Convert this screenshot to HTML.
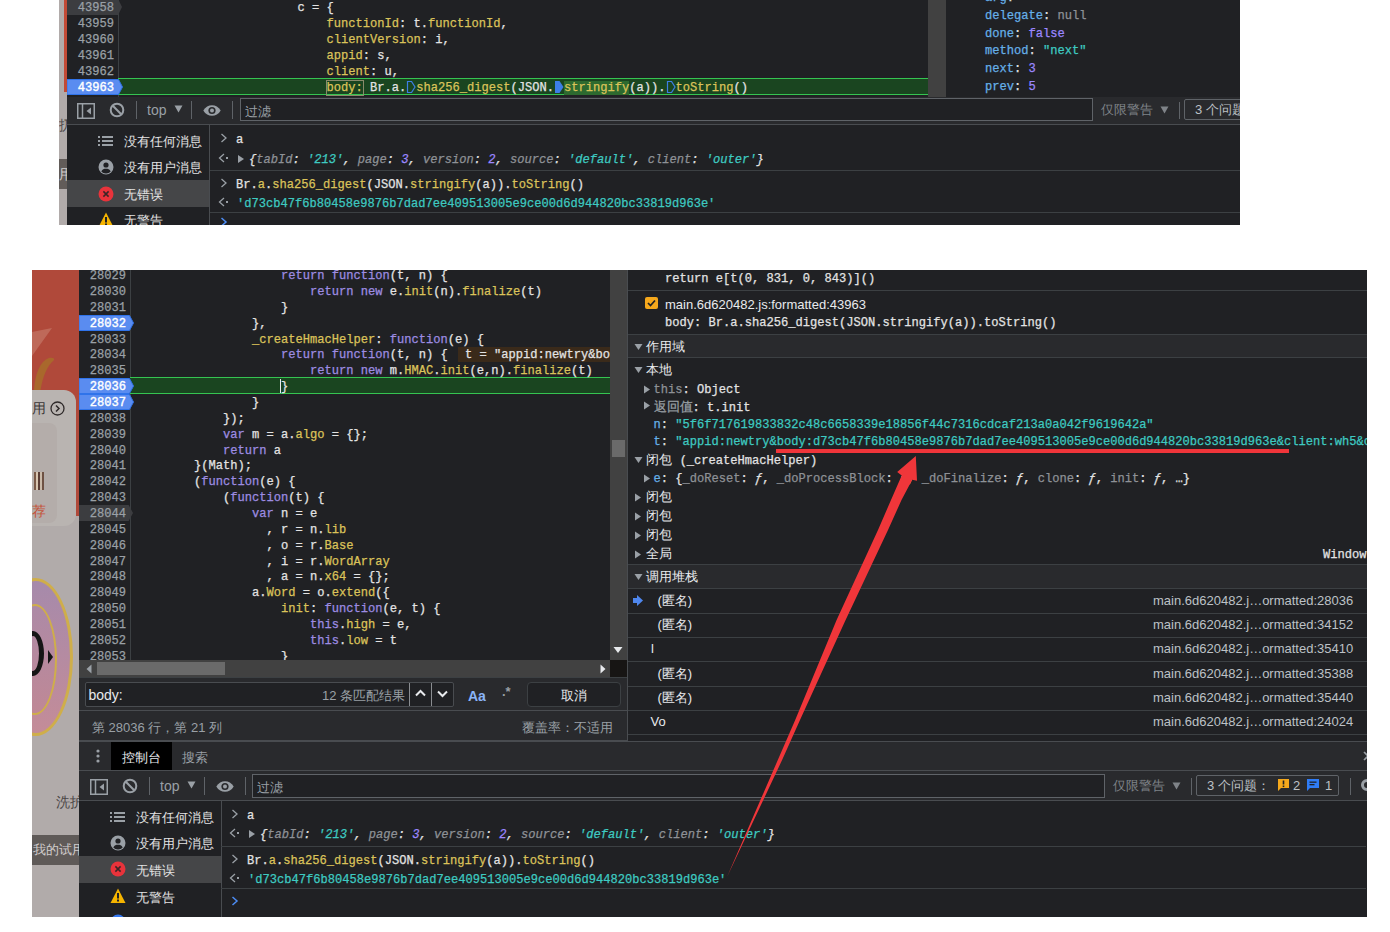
<!DOCTYPE html><html><head><meta charset="utf-8"><style>
*{box-sizing:border-box;margin:0;padding:0}
html,body{width:1390px;height:932px;overflow:hidden;background:#fff}
body{position:relative;font-family:"Liberation Sans",sans-serif}
div{position:absolute;white-space:pre}
i{font-style:normal}
svg{display:block}
.it i{font-style:italic}
.m{font-family:"Liberation Mono",monospace;font-size:12.08px;color:#e3e3e3;padding-top:1px;-webkit-text-stroke:0.25px}
.u{font-family:"Liberation Sans",sans-serif;font-size:13px;color:#e3e3e3}
.k{color:#9d8ce2}
.p{color:#dbc35a}
.w{color:#e3e3e3}
.s{color:#3ecac1}
.n{color:#9b87ff}
.b{color:#66b0e8}
.g{color:#8e9196}
.it{font-style:italic}
.ln{color:#9aa0a6;text-align:right}
.dt{background:#202124;overflow:hidden}
</style></head><body><div style="left:59px;top:0px;width:1181px;height:225px;overflow:hidden;background:#202124"><div style="left:0px;top:0px;width:8px;height:225px;background:#b1abaa"></div><div style="left:5px;top:0px;width:3px;height:92px;background:#c24a36"></div><div style="left:0px;top:0px;width:8px;height:225px;overflow:hidden"><div style="left:0px;top:159px;width:8px;height:30px;background:#625c59"></div><div class="u" style="left:0px;top:115px;height:20px;line-height:20px;color:#4a4646;font-size:14px">扔</div><div class="u" style="left:0px;top:164px;height:20px;line-height:20px;color:#d0cccc;font-size:14px">用</div></div><div style="left:8px;top:0px;width:52px;height:97px;background:#202124;border-right:1px solid #3c4043"></div><div style="left:59px;top:78px;width:810px;height:17px;background:#1a4520;border-top:1px solid #35c451;border-bottom:1px solid #35c451"></div><div style="left:8px;top:-1px;width:55px;height:16px;background:#3c3d40;clip-path:polygon(0 0,93% 0,100% 50%,93% 100%,0 100%)"></div><div class="m" style="left:8px;top:-1px;height:16px;line-height:16px;width:47px;text-align:right;color:#9aa0a6">43958</div><div class="m" style="left:8px;top:15px;height:16px;line-height:16px;width:47px;text-align:right;color:#9aa0a6">43959</div><div class="m" style="left:8px;top:31px;height:16px;line-height:16px;width:47px;text-align:right;color:#9aa0a6">43960</div><div class="m" style="left:8px;top:47px;height:16px;line-height:16px;width:47px;text-align:right;color:#9aa0a6">43961</div><div class="m" style="left:8px;top:63px;height:16px;line-height:16px;width:47px;text-align:right;color:#9aa0a6">43962</div><div style="left:8px;top:79px;width:56px;height:16px"><svg width="56" height="16"><path d="M0 0.5H51.5L55.5 8L51.5 15.5H0Z" fill="#5a8cf0" stroke="#2f73ea" stroke-width="1"/></svg></div><div class="m" style="left:8px;top:79px;height:16px;line-height:16px;width:47px;text-align:right;color:#ffffff;-webkit-text-stroke:0.4px">43963</div><div class="m" style="left:238.6px;top:-1px;height:16px;line-height:16px;"><i class="w">c = {</i></div><div class="m" style="left:267.6px;top:15px;height:16px;line-height:16px;"><i class="p">functionId</i><i class="w">: t.</i><i class="p">functionId</i><i class="w">,</i></div><div class="m" style="left:267.6px;top:31px;height:16px;line-height:16px;"><i class="p">clientVersion</i><i class="w">: i,</i></div><div class="m" style="left:267.6px;top:47px;height:16px;line-height:16px;"><i class="p">appid</i><i class="w">: s,</i></div><div class="m" style="left:267.6px;top:63px;height:16px;line-height:16px;"><i class="p">client</i><i class="w">: u,</i></div><div class="m" style="left:267.6px;top:79px;height:16px;line-height:16px;"><i class="p" style="outline:1px solid #8a8a6a;outline-offset:0px">body:</i><i class="w"> Br.a.</i><i style="display:inline-block;width:10px;height:12px;vertical-align:-2px;position:relative"><svg width="10" height="12" style="position:absolute;left:0;top:0"><path d="M1.5 0.5H5.5L9 6L5.5 11.5H1.5Z" fill="none" stroke="#3d7ee6" stroke-width="1.2"/></svg></i><i class="p">sha256_digest</i><i class="w">(JSON.</i><i style="display:inline-block;width:10px;height:12px;vertical-align:-2px;position:relative"><svg width="10" height="12" style="position:absolute;left:0;top:0"><path d="M1 0H5.5L9.5 6L5.5 12H1Z" fill="#3d7ee6"/></svg></i><i class="p" style="background:#2d6a2f">stringify</i><i class="w">(a)).</i><i style="display:inline-block;width:10px;height:12px;vertical-align:-2px;position:relative"><svg width="10" height="12" style="position:absolute;left:0;top:0"><path d="M1.5 0.5H5.5L9 6L5.5 11.5H1.5Z" fill="none" stroke="#3d7ee6" stroke-width="1.2"/></svg></i><i class="p">toString</i><i class="w">()</i></div><div style="left:869px;top:0px;width:18px;height:97px;background:#414141"></div><div style="left:887px;top:0px;width:294px;height:97px;background:#202124"></div><div class="m" style="left:926px;top:-11px;height:16px;line-height:16px;"><i class="b">arg</i><i class="w">:</i></div><div class="m" style="left:926px;top:7px;height:16px;line-height:16px;"><i class="b">delegate</i><i class="w">: </i><i class="g">null</i></div><div class="m" style="left:926px;top:25px;height:16px;line-height:16px;"><i class="b">done</i><i class="w">: </i><i class="n">false</i></div><div class="m" style="left:926px;top:42px;height:16px;line-height:16px;"><i class="b">method</i><i class="w">: </i><i class="s">&quot;next&quot;</i></div><div class="m" style="left:926px;top:60px;height:16px;line-height:16px;"><i class="b">next</i><i class="w">: </i><i class="n">3</i></div><div class="m" style="left:926px;top:78px;height:16px;line-height:16px;"><i class="b">prev</i><i class="w">: </i><i class="n">5</i></div><div style="left:8px;top:97px;width:1173px;height:28px;background:#292a2d;border-bottom:1px solid #494c50"></div><div style="left:18px;top:103px;width:18px;height:16px"><svg width="18" height="16"><rect x="0.75" y="0.75" width="16.5" height="14.5" fill="none" stroke="#9aa0a6" stroke-width="1.5"/><line x1="5.5" y1="1" x2="5.5" y2="15" stroke="#9aa0a6" stroke-width="1.5"/><path d="M14 4.5L9.5 8L14 11.5Z" fill="#9aa0a6"/></svg></div><div style="left:50px;top:102px;width:16px;height:16px"><svg width="16" height="16"><circle cx="8" cy="8" r="6.3" fill="none" stroke="#9aa0a6" stroke-width="2"/><line x1="3.8" y1="3.8" x2="12.2" y2="12.2" stroke="#9aa0a6" stroke-width="2"/></svg></div><div style="left:77px;top:101px;width:1px;height:18px;background:#5f6368"></div><div class="u" style="left:88px;top:101px;height:18px;line-height:18px;color:#9aa0a6;font-size:14px">top</div><div style="left:115px;top:105px;width:9px;height:8px"><svg width="9" height="8"><path d="M0.5 0.5H8.5L4.5 7.5Z" fill="#9aa0a6"/></svg></div><div style="left:132px;top:101px;width:1px;height:18px;background:#5f6368"></div><div style="left:144px;top:105px;width:18px;height:11px"><svg width="18" height="11"><path d="M0.3 5.5C2.5 1.8 5.5 0.2 9 0.2S15.5 1.8 17.7 5.5C15.5 9.2 12.5 10.8 9 10.8S2.5 9.2 0.3 5.5Z" fill="#9aa0a6"/><circle cx="9" cy="5.5" r="3.6" fill="#292a2d"/><circle cx="9" cy="5.5" r="2" fill="#9aa0a6"/></svg></div><div style="left:173px;top:101px;width:1px;height:18px;background:#5f6368"></div><div style="left:181px;top:98px;width:853px;height:23px;background:#202124;border:1px solid #5f6368"></div><div class="u" style="left:186px;top:101px;height:21px;line-height:21px;color:#9aa0a6;font-size:13px">过滤</div><div class="u" style="left:1042px;top:100px;height:20px;line-height:20px;color:#7f8388;font-size:13px">仅限警告</div><div style="left:1101px;top:106px;width:9px;height:8px"><svg width="9" height="8"><path d="M0.5 0.5H8.5L4.5 7.5Z" fill="#7f8388"/></svg></div><div style="left:1120px;top:102px;width:1px;height:17px;background:#5f6368"></div><div style="left:1125px;top:99px;width:80px;height:21px;border:1px solid #5f6368;border-radius:2px"></div><div class="u" style="left:1136px;top:100px;height:20px;line-height:20px;color:#bdc1c6;font-size:13px">3 个问题</div><div style="left:8px;top:125px;width:143px;height:200px;background:#202124;border-right:1px solid #494c50"></div><div style="left:8px;top:180px;width:142px;height:27px;background:#454648"></div><div style="left:39px;top:133px;width:16px;height:16px"><svg width="16" height="16"><g fill="#9aa0a6"><rect x="0" y="3" width="2" height="2"/><rect x="4" y="3" width="11" height="2"/><rect x="0" y="7" width="2" height="2"/><rect x="4" y="7" width="11" height="2"/><rect x="0" y="11" width="2" height="2"/><rect x="4" y="11" width="11" height="2"/></g></svg></div><div class="u" style="left:65px;top:132px;height:20px;line-height:20px;color:#e3e3e3;font-size:13px">没有任何消息</div><div style="left:39px;top:159px;width:16px;height:16px"><svg width="16" height="16"><circle cx="8" cy="8" r="7.5" fill="#9aa0a6"/><circle cx="8" cy="6" r="2.6" fill="#202124"/><path d="M3.3 12.5C4.5 10.3 6 9.8 8 9.8S11.5 10.3 12.7 12.5C11.5 13.8 10 14.4 8 14.4S4.5 13.8 3.3 12.5Z" fill="#202124"/></svg></div><div class="u" style="left:65px;top:158px;height:20px;line-height:20px;color:#e3e3e3;font-size:13px">没有用户消息</div><div style="left:39px;top:186px;width:16px;height:16px"><svg width="16" height="16"><circle cx="8" cy="8" r="7.5" fill="#e8333b"/><path d="M5.4 5.4L10.6 10.6M10.6 5.4L5.4 10.6" stroke="#3a2526" stroke-width="1.5"/></svg></div><div class="u" style="left:65px;top:185px;height:20px;line-height:20px;color:#e3e3e3;font-size:13px">无错误</div><div style="left:39px;top:212px;width:16px;height:16px"><svg width="16" height="16"><path d="M8 0.5L15.5 15H0.5Z" fill="#f5b400"/><rect x="7" y="5" width="2" height="5.5" fill="#202124"/><rect x="7" y="11.5" width="2" height="2" fill="#202124"/></svg></div><div class="u" style="left:65px;top:211px;height:20px;line-height:20px;color:#e3e3e3;font-size:13px">无警告</div><div style="left:151px;top:170px;width:1030px;height:1px;background:#3c4043"></div><div style="left:151px;top:212px;width:1030px;height:1px;background:#3c4043"></div><div style="left:161px;top:133px;width:8px;height:10px"><svg width="8" height="10"><path d="M1.5 1L6 5L1.5 9" fill="none" stroke="#9aa0a6" stroke-width="1.3"/></svg></div><div class="m" style="left:177px;top:131px;height:16px;line-height:16px;"><i class="w">a</i></div><div style="left:159px;top:153px;width:12px;height:10px"><svg width="12" height="10"><path d="M6 1L1.5 5L6 9" fill="none" stroke="#9aa0a6" stroke-width="1.3"/><rect x="8" y="4" width="2" height="2" fill="#9aa0a6"/></svg></div><div style="left:177.5px;top:154px;width:8px;height:10px"><svg width="8" height="10"><path d="M1 1L7 5L1 9Z" fill="#9aa0a6"/></svg></div><div class="m" style="left:190px;top:151px;height:16px;line-height:16px;"><i class="it"><i class="w">{</i><i class="g">tabId</i><i class="w">: </i><i class="s">&#x27;213&#x27;</i><i class="w">, </i><i class="g">page</i><i class="w">: </i><i class="n">3</i><i class="w">, </i><i class="g">version</i><i class="w">: </i><i class="n">2</i><i class="w">, </i><i class="g">source</i><i class="w">: </i><i class="s">&#x27;default&#x27;</i><i class="w">, </i><i class="g">client</i><i class="w">: </i><i class="s">&#x27;outer&#x27;</i><i class="w">}</i></i></div><div style="left:161px;top:178px;width:8px;height:10px"><svg width="8" height="10"><path d="M1.5 1L6 5L1.5 9" fill="none" stroke="#9aa0a6" stroke-width="1.3"/></svg></div><div class="m" style="left:177px;top:176px;height:16px;line-height:16px;"><i class="w">Br.</i><i class="p">a</i><i class="w">.</i><i class="p">sha256_digest</i><i class="w">(JSON.</i><i class="p">stringify</i><i class="w">(a)).</i><i class="p">toString</i><i class="w">()</i></div><div style="left:159px;top:197px;width:12px;height:10px"><svg width="12" height="10"><path d="M6 1L1.5 5L6 9" fill="none" stroke="#9aa0a6" stroke-width="1.3"/><rect x="8" y="4" width="2" height="2" fill="#9aa0a6"/></svg></div><div class="m" style="left:178px;top:195px;height:16px;line-height:16px;"><i class="s">&#x27;d73cb47f6b80458e9876b7dad7ee409513005e9ce00d6d944820bc33819d963e&#x27;</i></div><div style="left:161px;top:217px;width:8px;height:10px"><svg width="8" height="10"><path d="M1.5 1L6 5L1.5 9" fill="none" stroke="#4d8df5" stroke-width="1.5"/></svg></div></div><div style="left:32px;top:270px;width:1335px;height:647px;overflow:hidden;background:#202124"><div style="left:0px;top:0px;width:47px;height:647px;background:#b1abaa;overflow:hidden"><div style="left:0px;top:0px;width:48px;height:220px;background:#b0493a"></div><svg style="position:absolute;left:0;top:0" width="48" height="130"><path d="M0 62L20 58L0 86Z" fill="#d09080" opacity="0.45"/><path d="M2 120C3 104 8 91 17 88C20 87.5 23 88.5 22 90C15 96 11 106 8.5 120Z" fill="#a9682c"/></svg><div style="left:-10px;top:120px;width:54px;height:136px;background:#b9b4b1;border-radius:0 12px 12px 0"></div><div style="left:-10px;top:153px;width:34.5px;height:100px;background:#b4adaa;border-radius:0 8px 8px 0"></div><div class="u" style="left:0px;top:128px;height:20px;line-height:20px;color:#3b3636;font-size:14px">用</div><div style="left:18px;top:131px;width:15px;height:15px"><svg width="15" height="15"><circle cx="7.5" cy="7.5" r="6.5" fill="none" stroke="#2f2a2a" stroke-width="1.3"/><path d="M6 4.5L9 7.5L6 10.5" fill="none" stroke="#2f2a2a" stroke-width="1.5"/></svg></div><div style="left:2px;top:202px;width:10px;height:18px;background:linear-gradient(90deg,#7a5a48 0 20%,#d8c5b0 20% 40%,#5a3d35 40% 60%,#c9b9a8 60% 80%,#6e5244 80%)"></div><div class="u" style="left:0px;top:231px;height:20px;line-height:20px;color:#c4533a;font-size:14px">荐</div><div style="left:-34.5px;top:308px;width:75px;height:158px;border-radius:50%;border:3px solid #cfae4a;background:linear-gradient(#a68aab,#c48c98)"></div><div style="left:-19px;top:333.5px;width:44px;height:111px;border-radius:50%;border:2px solid #cfae4a;background:linear-gradient(#ad8aa6,#bf8896)"></div><div style="left:-10px;top:361px;width:22px;height:45px;border-radius:50%;border:5px solid #151515"></div><div style="left:16px;top:380px;width:5px;height:14px"><svg width="5" height="14"><path d="M0 0L5 7L0 14Z" fill="#151515"/></svg></div><div class="u" style="left:24px;top:522px;height:20px;line-height:20px;color:#4a4646;font-size:14px">洗护</div><div style="left:0px;top:565px;width:48px;height:30px;background:#5f5a58"></div><div class="u" style="left:1px;top:570px;height:20px;line-height:20px;color:#d0cccc;font-size:13px">我的试用</div></div><div style="left:44px;top:0px;width:3px;height:246px;background:#b0493a"></div><div style="left:47px;top:0px;width:52px;height:390px;background:#202124;border-right:1px solid #3c4043"></div><div style="left:98px;top:107.15px;width:480px;height:17px;background:#1a4520;border-top:1px solid #35c451;border-bottom:1px solid #35c451"></div><div class="m" style="left:47px;top:-2.8px;height:16px;line-height:16px;width:47px;text-align:right;color:#9aa0a6">28029</div><div class="m" style="left:249.0px;top:-2.8px;height:16px;line-height:16px;"><i class="k">return function</i><i class="w">(t, n) {</i></div><div class="m" style="left:47px;top:13.05px;height:16px;line-height:16px;width:47px;text-align:right;color:#9aa0a6">28030</div><div class="m" style="left:278.0px;top:13.05px;height:16px;line-height:16px;"><i class="k">return new</i><i class="w"> e.</i><i class="p">init</i><i class="w">(n).</i><i class="p">finalize</i><i class="w">(t)</i></div><div class="m" style="left:47px;top:28.9px;height:16px;line-height:16px;width:47px;text-align:right;color:#9aa0a6">28031</div><div class="m" style="left:249.0px;top:28.9px;height:16px;line-height:16px;"><i class="w">}</i></div><div style="left:47px;top:44.75px;width:55px;height:16px"><svg width="55" height="16"><path d="M0 0.5H50.5L54.5 8L50.5 15.5H0Z" fill="#5a8cf0" stroke="#2f73ea" stroke-width="1"/></svg></div><div class="m" style="left:47px;top:44.75px;height:16px;line-height:16px;width:47px;text-align:right;color:#ffffff;-webkit-text-stroke:0.4px">28032</div><div class="m" style="left:220.0px;top:44.75px;height:16px;line-height:16px;"><i class="w">},</i></div><div class="m" style="left:47px;top:60.6px;height:16px;line-height:16px;width:47px;text-align:right;color:#9aa0a6">28033</div><div class="m" style="left:220.0px;top:60.6px;height:16px;line-height:16px;"><i class="p">_createHmacHelper</i><i class="w">: </i><i class="k">function</i><i class="w">(e) {</i></div><div class="m" style="left:47px;top:76.45px;height:16px;line-height:16px;width:47px;text-align:right;color:#9aa0a6">28034</div><div class="m" style="left:249.0px;top:76.45px;height:16px;line-height:16px;"><i class="k">return function</i><i class="w">(t, n) {</i></div><div class="m" style="left:47px;top:92.3px;height:16px;line-height:16px;width:47px;text-align:right;color:#9aa0a6">28035</div><div class="m" style="left:278.0px;top:92.3px;height:16px;line-height:16px;"><i class="k">return new</i><i class="w"> m.</i><i class="p">HMAC</i><i class="w">.</i><i class="p">init</i><i class="w">(e,n).</i><i class="p">finalize</i><i class="w">(t)</i></div><div style="left:47px;top:108.15px;width:55px;height:16px"><svg width="55" height="16"><path d="M0 0.5H50.5L54.5 8L50.5 15.5H0Z" fill="#5a8cf0" stroke="#2f73ea" stroke-width="1"/></svg></div><div class="m" style="left:47px;top:108.15px;height:16px;line-height:16px;width:47px;text-align:right;color:#ffffff;-webkit-text-stroke:0.4px">28036</div><div class="m" style="left:249.0px;top:108.15px;height:16px;line-height:16px;"><i class="w">}</i></div><div style="left:47px;top:124.0px;width:55px;height:16px"><svg width="55" height="16"><path d="M0 0.5H50.5L54.5 8L50.5 15.5H0Z" fill="#5a8cf0" stroke="#2f73ea" stroke-width="1"/></svg></div><div class="m" style="left:47px;top:124.0px;height:16px;line-height:16px;width:47px;text-align:right;color:#ffffff;-webkit-text-stroke:0.4px">28037</div><div class="m" style="left:220.0px;top:124.0px;height:16px;line-height:16px;"><i class="w">}</i></div><div class="m" style="left:47px;top:139.85px;height:16px;line-height:16px;width:47px;text-align:right;color:#9aa0a6">28038</div><div class="m" style="left:191.0px;top:139.85px;height:16px;line-height:16px;"><i class="w">});</i></div><div class="m" style="left:47px;top:155.7px;height:16px;line-height:16px;width:47px;text-align:right;color:#9aa0a6">28039</div><div class="m" style="left:191.0px;top:155.7px;height:16px;line-height:16px;"><i class="k">var</i><i class="w"> m = a.</i><i class="p">algo</i><i class="w"> = {};</i></div><div class="m" style="left:47px;top:171.55px;height:16px;line-height:16px;width:47px;text-align:right;color:#9aa0a6">28040</div><div class="m" style="left:191.0px;top:171.55px;height:16px;line-height:16px;"><i class="k">return</i><i class="w"> a</i></div><div class="m" style="left:47px;top:187.4px;height:16px;line-height:16px;width:47px;text-align:right;color:#9aa0a6">28041</div><div class="m" style="left:162.0px;top:187.4px;height:16px;line-height:16px;"><i class="w">}(Math);</i></div><div class="m" style="left:47px;top:203.25px;height:16px;line-height:16px;width:47px;text-align:right;color:#9aa0a6">28042</div><div class="m" style="left:162.0px;top:203.25px;height:16px;line-height:16px;"><i class="w">(</i><i class="k">function</i><i class="w">(e) {</i></div><div class="m" style="left:47px;top:219.1px;height:16px;line-height:16px;width:47px;text-align:right;color:#9aa0a6">28043</div><div class="m" style="left:191.0px;top:219.1px;height:16px;line-height:16px;"><i class="w">(</i><i class="k">function</i><i class="w">(t) {</i></div><div style="left:47px;top:234.95px;width:54px;height:16px;background:#3c3d40;clip-path:polygon(0 0,92% 0,100% 50%,92% 100%,0 100%)"></div><div class="m" style="left:47px;top:234.95px;height:16px;line-height:16px;width:47px;text-align:right;color:#9aa0a6">28044</div><div class="m" style="left:220.0px;top:234.95px;height:16px;line-height:16px;"><i class="k">var</i><i class="w"> n = e</i></div><div class="m" style="left:47px;top:250.8px;height:16px;line-height:16px;width:47px;text-align:right;color:#9aa0a6">28045</div><div class="m" style="left:234.5px;top:250.8px;height:16px;line-height:16px;"><i class="w">, r = n.</i><i class="p">lib</i></div><div class="m" style="left:47px;top:266.65px;height:16px;line-height:16px;width:47px;text-align:right;color:#9aa0a6">28046</div><div class="m" style="left:234.5px;top:266.65px;height:16px;line-height:16px;"><i class="w">, o = r.</i><i class="p">Base</i></div><div class="m" style="left:47px;top:282.5px;height:16px;line-height:16px;width:47px;text-align:right;color:#9aa0a6">28047</div><div class="m" style="left:234.5px;top:282.5px;height:16px;line-height:16px;"><i class="w">, i = r.</i><i class="p">WordArray</i></div><div class="m" style="left:47px;top:298.35px;height:16px;line-height:16px;width:47px;text-align:right;color:#9aa0a6">28048</div><div class="m" style="left:234.5px;top:298.35px;height:16px;line-height:16px;"><i class="w">, a = n.</i><i class="p">x64</i><i class="w"> = {};</i></div><div class="m" style="left:47px;top:314.2px;height:16px;line-height:16px;width:47px;text-align:right;color:#9aa0a6">28049</div><div class="m" style="left:220.0px;top:314.2px;height:16px;line-height:16px;"><i class="w">a.</i><i class="p">Word</i><i class="w"> = o.</i><i class="p">extend</i><i class="w">({</i></div><div class="m" style="left:47px;top:330.05px;height:16px;line-height:16px;width:47px;text-align:right;color:#9aa0a6">28050</div><div class="m" style="left:249.0px;top:330.05px;height:16px;line-height:16px;"><i class="p">init</i><i class="w">: </i><i class="k">function</i><i class="w">(e, t) {</i></div><div class="m" style="left:47px;top:345.9px;height:16px;line-height:16px;width:47px;text-align:right;color:#9aa0a6">28051</div><div class="m" style="left:278.0px;top:345.9px;height:16px;line-height:16px;"><i class="k">this</i><i class="w">.</i><i class="p">high</i><i class="w"> = e,</i></div><div class="m" style="left:47px;top:361.75px;height:16px;line-height:16px;width:47px;text-align:right;color:#9aa0a6">28052</div><div class="m" style="left:278.0px;top:361.75px;height:16px;line-height:16px;"><i class="k">this</i><i class="w">.</i><i class="p">low</i><i class="w"> = t</i></div><div class="m" style="left:47px;top:377.6px;height:16px;line-height:16px;width:47px;text-align:right;color:#9aa0a6">28053</div><div class="m" style="left:249.0px;top:377.6px;height:16px;line-height:16px;"><i class="w">}</i></div><div class="m" style="left:425.75px;top:77.45px;height:15px;line-height:15px;background:#3a2a1a;padding-right:20px"><i class="w"> t = &quot;appid:newtry&amp;body:d73cb47f6b80458e9876b7dad7ee4095</i></div><div style="left:248.0px;top:109.15px;width:1px;height:14px;background:#e8eaed"></div><div style="left:578px;top:0px;width:18px;height:390px;background:#414141"></div><div style="left:580px;top:170px;width:13px;height:17px;background:#6a6a6a"></div><div style="left:581px;top:376px;width:10px;height:8px"><svg width="10" height="8"><path d="M0.5 1H9.5L5 7Z" fill="#e8eaed"/></svg></div><div style="left:47px;top:390px;width:531px;height:17px;background:#414141"></div><div style="left:65px;top:392px;width:128px;height:13px;background:#6a6a6a"></div><div style="left:54px;top:394px;width:6px;height:10px"><svg width="6" height="10"><path d="M5.5 0.5V9.5L0.5 5Z" fill="#9aa0a6"/></svg></div><div style="left:568px;top:394px;width:6px;height:10px"><svg width="6" height="10"><path d="M0.5 0.5V9.5L5.5 5Z" fill="#e8eaed"/></svg></div><div style="left:578px;top:390px;width:18px;height:17px;background:#171514"></div><div style="left:47px;top:407px;width:549px;height:34px;background:#292a2d;border-top:1px solid #3c4043;border-bottom:1px solid #494c50"></div><div style="left:53px;top:412px;width:369px;height:25px;background:#202124;border:1px solid #494c50;border-radius:2px"></div><div class="u" style="left:56.5px;top:415px;height:20px;line-height:20px;color:#e8eaed;font-size:14px">body:</div><div class="u" style="left:290px;top:416px;height:20px;line-height:20px;color:#9aa0a6;font-size:13px">12 条匹配结果</div><div style="left:377px;top:413px;width:1px;height:23px;background:#8a8d91"></div><div style="left:399px;top:413px;width:1px;height:23px;background:#8a8d91"></div><div style="left:383px;top:419px;width:11px;height:8px"><svg width="11" height="8"><path d="M1 6.5L5.5 2L10 6.5" fill="none" stroke="#e8eaed" stroke-width="2"/></svg></div><div style="left:405px;top:420px;width:11px;height:8px"><svg width="11" height="8"><path d="M1 1.5L5.5 6L10 1.5" fill="none" stroke="#e8eaed" stroke-width="2"/></svg></div><div class="u" style="left:436px;top:415.5px;height:20px;line-height:20px;color:#8ab4f8;font-size:14px;font-weight:bold">Aa</div><div class="u" style="left:470px;top:412px;height:20px;line-height:20px;color:#9aa0a6;font-size:13px;font-weight:bold">.*</div><div style="left:495px;top:412px;width:94px;height:25px;background:#202124;border:1px solid #3c4043;border-radius:4px"></div><div class="u" style="left:495px;top:416px;height:20px;line-height:20px;width:94px;text-align:center;color:#e8eaed;font-size:13px">取消</div><div style="left:47px;top:441px;width:549px;height:30px;background:#292a2d;border-bottom:1px solid #494c50"></div><div class="u" style="left:60px;top:448px;height:20px;line-height:20px;color:#9aa0a6;font-size:13px">第 28036 行，第 21 列</div><div class="u" style="left:490px;top:448px;height:20px;line-height:20px;color:#9aa0a6;font-size:13px">覆盖率：不适用</div><div style="left:595px;top:0px;width:1px;height:471px;background:#494c50"></div><div style="left:596px;top:0px;width:739px;height:471px;background:#202124"></div><div class="m" style="left:633px;top:0px;height:16px;line-height:16px;"><i class="w">return e[t(0, 831, 0, 843)]()</i></div><div style="left:596px;top:20px;width:739px;height:1px;background:#3c4043"></div><div style="left:613px;top:27px;width:13px;height:12px"><svg width="13" height="12"><rect x="0" y="0" width="13" height="12" rx="2" fill="#f5a81c"/><path d="M3 6L5.5 8.5L10 3.5" fill="none" stroke="#202124" stroke-width="1.7"/></svg></div><div class="u" style="left:633px;top:25px;height:20px;line-height:20px;color:#e8eaed;font-size:13px">main.6d620482.js:formatted:43963</div><div class="m" style="left:633px;top:44px;height:16px;line-height:16px;"><i class="w">body: Br.a.sha256_digest(JSON.stringify(a)).toString()</i></div><div style="left:596px;top:64px;width:739px;height:1px;background:#3c4043"></div><div style="left:596px;top:65px;width:739px;height:22px;background:#292a2d"></div><div style="left:602px;top:73px;width:9px;height:8px"><svg width="9" height="8"><path d="M0.5 1H8.5L4.5 7Z" fill="#9aa0a6"/></svg></div><div class="u" style="left:614px;top:67px;height:20px;line-height:20px;color:#e8eaed;font-size:13px">作用域</div><div style="left:596px;top:87px;width:739px;height:1px;background:#3c4043"></div><div style="left:602px;top:96px;width:9px;height:8px"><svg width="9" height="8"><path d="M0.5 1H8.5L4.5 7Z" fill="#9aa0a6"/></svg></div><div class="u" style="left:614px;top:90px;height:20px;line-height:20px;color:#e8eaed;font-size:13px">本地</div><div style="left:611px;top:115px;width:8px;height:9px"><svg width="8" height="9"><path d="M1 0.5L7 4.5L1 8.5Z" fill="#9aa0a6"/></svg></div><div class="m" style="left:621.5px;top:111px;height:16px;line-height:16px;"><i class="g">this</i><i class="w">: Object</i></div><div style="left:611px;top:131px;width:8px;height:9px"><svg width="8" height="9"><path d="M1 0.5L7 4.5L1 8.5Z" fill="#9aa0a6"/></svg></div><div class="m" style="left:621.5px;top:126px;height:20px;line-height:20px;"><span class="u" style="color:#9aa0a6">返回值</span><i class="w">: t.init</i></div><div class="m" style="left:621.5px;top:146px;height:16px;line-height:16px;"><i class="b">n</i><i class="w">: </i><i class="s">&quot;5f6f717619833832c48c6658339e18856f44c7316cdcaf213a0a042f9619642a&quot;</i></div><div class="m" style="left:621.5px;top:163px;height:16px;line-height:16px;"><i class="b">t</i><i class="w">: </i><i class="s">&quot;appid:newtry&amp;body:d73cb47f6b80458e9876b7dad7ee409513005e9ce00d6d944820bc33819d963e&amp;client:wh5&amp;clientVersion:1.0.0&quot;</i></div><div style="left:602px;top:186px;width:9px;height:8px"><svg width="9" height="8"><path d="M0.5 1H8.5L4.5 7Z" fill="#9aa0a6"/></svg></div><div class="u" style="left:614px;top:180px;height:20px;line-height:20px;color:#e8eaed;font-size:13px">闭包 <span class="m" style="margin-left:4px">(_createHmacHelper)</span></div><div style="left:611px;top:204px;width:8px;height:9px"><svg width="8" height="9"><path d="M1 0.5L7 4.5L1 8.5Z" fill="#9aa0a6"/></svg></div><div class="m" style="left:621.5px;top:200px;height:16px;line-height:16px;"><i class="b">e</i><i class="w">: {</i><i class="g">_doReset</i><i class="w">: </i><i class="it">ƒ</i><i class="w">, </i><i class="g">_doProcessBlock</i><i class="w">: </i><i class="it">ƒ</i><i class="w">, </i><i class="g">_doFinalize</i><i class="w">: </i><i class="it">ƒ</i><i class="w">, </i><i class="g">clone</i><i class="w">: </i><i class="it">ƒ</i><i class="w">, </i><i class="g">init</i><i class="w">: </i><i class="it">ƒ</i><i class="w">, …}</i></div><div style="left:602px;top:223px;width:8px;height:9px"><svg width="8" height="9"><path d="M1 0.5L7 4.5L1 8.5Z" fill="#9aa0a6"/></svg></div><div class="u" style="left:614px;top:217px;height:20px;line-height:20px;color:#e8eaed;font-size:13px">闭包</div><div style="left:602px;top:242px;width:8px;height:9px"><svg width="8" height="9"><path d="M1 0.5L7 4.5L1 8.5Z" fill="#9aa0a6"/></svg></div><div class="u" style="left:614px;top:236px;height:20px;line-height:20px;color:#e8eaed;font-size:13px">闭包</div><div style="left:602px;top:261px;width:8px;height:9px"><svg width="8" height="9"><path d="M1 0.5L7 4.5L1 8.5Z" fill="#9aa0a6"/></svg></div><div class="u" style="left:614px;top:255px;height:20px;line-height:20px;color:#e8eaed;font-size:13px">闭包</div><div style="left:602px;top:280px;width:8px;height:9px"><svg width="8" height="9"><path d="M1 0.5L7 4.5L1 8.5Z" fill="#9aa0a6"/></svg></div><div class="u" style="left:614px;top:274px;height:20px;line-height:20px;color:#e8eaed;font-size:13px">全局</div><div class="m" style="left:1291px;top:276px;height:16px;line-height:16px;"><i class="w">Window</i></div><div style="left:596px;top:294px;width:739px;height:1px;background:#3c4043"></div><div style="left:596px;top:295px;width:739px;height:23px;background:#292a2d"></div><div style="left:602px;top:303px;width:9px;height:8px"><svg width="9" height="8"><path d="M0.5 1H8.5L4.5 7Z" fill="#9aa0a6"/></svg></div><div class="u" style="left:614px;top:297px;height:20px;line-height:20px;color:#e8eaed;font-size:13px">调用堆栈</div><div style="left:596px;top:318px;width:739px;height:1px;background:#3c4043"></div><div class="u" style="left:625.5px;top:321.0px;height:20px;line-height:20px;color:#e8eaed;font-size:13px">(匿名)</div><div class="u" style="left:1121px;top:321.0px;height:20px;line-height:20px;color:#bdc1c6;font-size:13px">main.6d620482.j…ormatted:28036</div><div style="left:596px;top:343.0px;width:739px;height:1px;background:#3c4043"></div><div class="u" style="left:625.5px;top:345.2px;height:20px;line-height:20px;color:#e8eaed;font-size:13px">(匿名)</div><div class="u" style="left:1121px;top:345.2px;height:20px;line-height:20px;color:#bdc1c6;font-size:13px">main.6d620482.j…ormatted:34152</div><div style="left:596px;top:367.2px;width:739px;height:1px;background:#3c4043"></div><div class="u" style="left:619px;top:369.4px;height:20px;line-height:20px;color:#e8eaed;font-size:13px">l</div><div class="u" style="left:1121px;top:369.4px;height:20px;line-height:20px;color:#bdc1c6;font-size:13px">main.6d620482.j…ormatted:35410</div><div style="left:596px;top:391.4px;width:739px;height:1px;background:#3c4043"></div><div class="u" style="left:625.5px;top:393.6px;height:20px;line-height:20px;color:#e8eaed;font-size:13px">(匿名)</div><div class="u" style="left:1121px;top:393.6px;height:20px;line-height:20px;color:#bdc1c6;font-size:13px">main.6d620482.j…ormatted:35388</div><div style="left:596px;top:415.6px;width:739px;height:1px;background:#3c4043"></div><div class="u" style="left:625.5px;top:417.8px;height:20px;line-height:20px;color:#e8eaed;font-size:13px">(匿名)</div><div class="u" style="left:1121px;top:417.8px;height:20px;line-height:20px;color:#bdc1c6;font-size:13px">main.6d620482.j…ormatted:35440</div><div style="left:596px;top:439.8px;width:739px;height:1px;background:#3c4043"></div><div class="u" style="left:618.5px;top:442.0px;height:20px;line-height:20px;color:#e8eaed;font-size:13px">Vo</div><div class="u" style="left:1121px;top:442.0px;height:20px;line-height:20px;color:#bdc1c6;font-size:13px">main.6d620482.j…ormatted:24024</div><div style="left:596px;top:464.0px;width:739px;height:1px;background:#3c4043"></div><div style="left:601px;top:325px;width:10px;height:11px"><svg width="10" height="11"><path d="M0 3H4V0L10 5.5L4 11V8H0Z" fill="#4f87ee"/></svg></div><div style="left:47px;top:471px;width:1288px;height:30px;background:#292a2d;border-top:1px solid #494c50;border-bottom:1px solid #494c50"></div><div style="left:64px;top:479px;width:4px;height:14px"><svg width="4" height="14"><circle cx="2" cy="2" r="1.6" fill="#9aa0a6"/><circle cx="2" cy="7" r="1.6" fill="#9aa0a6"/><circle cx="2" cy="12" r="1.6" fill="#9aa0a6"/></svg></div><div style="left:79px;top:472px;width:61px;height:28px;background:#000000"></div><div class="u" style="left:79px;top:477.5px;height:20px;line-height:20px;width:61px;text-align:center;color:#e8eaed;font-size:13px">控制台</div><div class="u" style="left:150px;top:477.5px;height:20px;line-height:20px;color:#9aa0a6;font-size:13px">搜索</div><div style="left:1331px;top:481px;width:10px;height:10px"><svg width="10" height="10"><path d="M1 1L9 9M9 1L1 9" stroke="#9aa0a6" stroke-width="1.6"/></svg></div><div style="left:47px;top:501px;width:1288px;height:30px;background:#292a2d;border-bottom:1px solid #494c50"></div><div style="left:58px;top:509px;width:18px;height:16px"><svg width="18" height="16"><rect x="0.75" y="0.75" width="16.5" height="14.5" fill="none" stroke="#9aa0a6" stroke-width="1.5"/><line x1="5.5" y1="1" x2="5.5" y2="15" stroke="#9aa0a6" stroke-width="1.5"/><path d="M14 4.5L9.5 8L14 11.5Z" fill="#9aa0a6"/></svg></div><div style="left:90px;top:508px;width:16px;height:16px"><svg width="16" height="16"><circle cx="8" cy="8" r="6.3" fill="none" stroke="#9aa0a6" stroke-width="2"/><line x1="3.8" y1="3.8" x2="12.2" y2="12.2" stroke="#9aa0a6" stroke-width="2"/></svg></div><div style="left:117px;top:507px;width:1px;height:18px;background:#5f6368"></div><div class="u" style="left:128px;top:507px;height:18px;line-height:18px;color:#9aa0a6;font-size:14px">top</div><div style="left:155px;top:511px;width:9px;height:8px"><svg width="9" height="8"><path d="M0.5 0.5H8.5L4.5 7.5Z" fill="#9aa0a6"/></svg></div><div style="left:172px;top:507px;width:1px;height:18px;background:#5f6368"></div><div style="left:184px;top:511px;width:18px;height:11px"><svg width="18" height="11"><path d="M0.3 5.5C2.5 1.8 5.5 0.2 9 0.2S15.5 1.8 17.7 5.5C15.5 9.2 12.5 10.8 9 10.8S2.5 9.2 0.3 5.5Z" fill="#9aa0a6"/><circle cx="9" cy="5.5" r="3.6" fill="#292a2d"/><circle cx="9" cy="5.5" r="2" fill="#9aa0a6"/></svg></div><div style="left:213px;top:507px;width:1px;height:18px;background:#5f6368"></div><div style="left:220px;top:504px;width:853px;height:24px;background:#202124;border:1px solid #5f6368"></div><div class="u" style="left:225px;top:508px;height:20px;line-height:20px;color:#9aa0a6;font-size:13px">过滤</div><div class="u" style="left:1081px;top:506px;height:20px;line-height:20px;color:#7f8388;font-size:13px">仅限警告</div><div style="left:1140px;top:512px;width:9px;height:8px"><svg width="9" height="8"><path d="M0.5 0.5H8.5L4.5 7.5Z" fill="#7f8388"/></svg></div><div style="left:1159px;top:508px;width:1px;height:17px;background:#5f6368"></div><div style="left:1164px;top:505px;width:143px;height:21px;border:1px solid #5f6368;border-radius:2px"></div><div class="u" style="left:1175px;top:506px;height:20px;line-height:20px;color:#bdc1c6;font-size:13px">3 个问题：</div><div style="left:1246px;top:509px;width:11px;height:12px"><svg width="11" height="12"><path d="M0 0H11V9H3L0 12Z" fill="#f5a81c"/><rect x="4.7" y="1.5" width="1.6" height="4" fill="#202124"/><rect x="4.7" y="6.5" width="1.6" height="1.6" fill="#202124"/></svg></div><div class="u" style="left:1261px;top:506px;height:20px;line-height:20px;color:#bdc1c6;font-size:13px">2</div><div style="left:1275px;top:509px;width:12px;height:12px"><svg width="12" height="12"><path d="M0 0H12V9H3L0 12Z" fill="#2f7cf6"/><rect x="2.5" y="2.5" width="7" height="1.3" fill="#202124"/><rect x="2.5" y="5" width="5" height="1.3" fill="#202124"/></svg></div><div class="u" style="left:1293px;top:506px;height:20px;line-height:20px;color:#bdc1c6;font-size:13px">1</div><div style="left:1318px;top:508px;width:1px;height:17px;background:#5f6368"></div><div style="left:1329px;top:509px;width:12px;height:12px"><svg width="12" height="12"><circle cx="6" cy="6" r="4.5" fill="none" stroke="#9aa0a6" stroke-width="3"/></svg></div><div style="left:47px;top:531px;width:143px;height:200px;background:#202124;border-right:1px solid #494c50"></div><div style="left:47px;top:586px;width:142px;height:27px;background:#454648"></div><div style="left:78px;top:538.5px;width:16px;height:16px"><svg width="16" height="16"><g fill="#9aa0a6"><rect x="0" y="3" width="2" height="2"/><rect x="4" y="3" width="11" height="2"/><rect x="0" y="7" width="2" height="2"/><rect x="4" y="7" width="11" height="2"/><rect x="0" y="11" width="2" height="2"/><rect x="4" y="11" width="11" height="2"/></g></svg></div><div class="u" style="left:104px;top:538.0px;height:20px;line-height:20px;color:#e3e3e3;font-size:13px">没有任何消息</div><div style="left:78px;top:564.7px;width:16px;height:16px"><svg width="16" height="16"><circle cx="8" cy="8" r="7.5" fill="#9aa0a6"/><circle cx="8" cy="6" r="2.6" fill="#202124"/><path d="M3.3 12.5C4.5 10.3 6 9.8 8 9.8S11.5 10.3 12.7 12.5C11.5 13.8 10 14.4 8 14.4S4.5 13.8 3.3 12.5Z" fill="#202124"/></svg></div><div class="u" style="left:104px;top:564.2px;height:20px;line-height:20px;color:#e3e3e3;font-size:13px">没有用户消息</div><div style="left:78px;top:591px;width:16px;height:16px"><svg width="16" height="16"><circle cx="8" cy="8" r="7.5" fill="#e8333b"/><path d="M5.4 5.4L10.6 10.6M10.6 5.4L5.4 10.6" stroke="#3a2526" stroke-width="1.5"/></svg></div><div class="u" style="left:104px;top:590.5px;height:20px;line-height:20px;color:#e3e3e3;font-size:13px">无错误</div><div style="left:78px;top:618px;width:16px;height:16px"><svg width="16" height="16"><path d="M8 0.5L15.5 15H0.5Z" fill="#f5b400"/><rect x="7" y="5" width="2" height="5.5" fill="#202124"/><rect x="7" y="11.5" width="2" height="2" fill="#202124"/></svg></div><div class="u" style="left:104px;top:617.5px;height:20px;line-height:20px;color:#e3e3e3;font-size:13px">无警告</div><div style="left:78px;top:644px;width:16px;height:16px"><svg width="16" height="16"><circle cx="8" cy="8" r="7.5" fill="#3478f0"/></svg></div><div style="left:189px;top:575.5px;width:1145px;height:1px;background:#3c4043"></div><div style="left:189px;top:618px;width:1145px;height:1px;background:#3c4043"></div><div style="left:199px;top:538.7px;width:8px;height:10px"><svg width="8" height="10"><path d="M1.5 1L6 5L1.5 9" fill="none" stroke="#9aa0a6" stroke-width="1.3"/></svg></div><div class="m" style="left:215px;top:536.7px;height:16px;line-height:16px;"><i class="w">a</i></div><div style="left:197px;top:558px;width:12px;height:10px"><svg width="12" height="10"><path d="M6 1L1.5 5L6 9" fill="none" stroke="#9aa0a6" stroke-width="1.3"/><rect x="8" y="4" width="2" height="2" fill="#9aa0a6"/></svg></div><div style="left:215.5px;top:559px;width:8px;height:10px"><svg width="8" height="10"><path d="M1 1L7 5L1 9Z" fill="#9aa0a6"/></svg></div><div class="m" style="left:228px;top:556px;height:16px;line-height:16px;"><i class="it"><i class="w">{</i><i class="g">tabId</i><i class="w">: </i><i class="s">&#x27;213&#x27;</i><i class="w">, </i><i class="g">page</i><i class="w">: </i><i class="n">3</i><i class="w">, </i><i class="g">version</i><i class="w">: </i><i class="n">2</i><i class="w">, </i><i class="g">source</i><i class="w">: </i><i class="s">&#x27;default&#x27;</i><i class="w">, </i><i class="g">client</i><i class="w">: </i><i class="s">&#x27;outer&#x27;</i><i class="w">}</i></i></div><div style="left:199px;top:583.6px;width:8px;height:10px"><svg width="8" height="10"><path d="M1.5 1L6 5L1.5 9" fill="none" stroke="#9aa0a6" stroke-width="1.3"/></svg></div><div class="m" style="left:215px;top:581.6px;height:16px;line-height:16px;"><i class="w">Br.</i><i class="p">a</i><i class="w">.</i><i class="p">sha256_digest</i><i class="w">(JSON.</i><i class="p">stringify</i><i class="w">(a)).</i><i class="p">toString</i><i class="w">()</i></div><div style="left:197px;top:603px;width:12px;height:10px"><svg width="12" height="10"><path d="M6 1L1.5 5L6 9" fill="none" stroke="#9aa0a6" stroke-width="1.3"/><rect x="8" y="4" width="2" height="2" fill="#9aa0a6"/></svg></div><div class="m" style="left:216px;top:601px;height:16px;line-height:16px;"><i class="s">&#x27;d73cb47f6b80458e9876b7dad7ee409513005e9ce00d6d944820bc33819d963e&#x27;</i></div><div style="left:199px;top:625.6px;width:8px;height:10px"><svg width="8" height="10"><path d="M1.5 1L6 5L1.5 9" fill="none" stroke="#4d8df5" stroke-width="1.5"/></svg></div></div><div style="left:776px;top:449px;width:513px;height:4px;background:#f0353a"></div><svg style="position:absolute;left:0;top:0" width="1390" height="932"><path d="M727 877L782.1 760L800 720L845.6 620L888 530L901.5 500L912.2 479.8L917 480.8L915.8 455.9L897.2 471.9L901.7 475.5L891 500L878 530L836.6 620L795.2 720L777.8 760Z" fill="#f0363a"/></svg></body></html>
